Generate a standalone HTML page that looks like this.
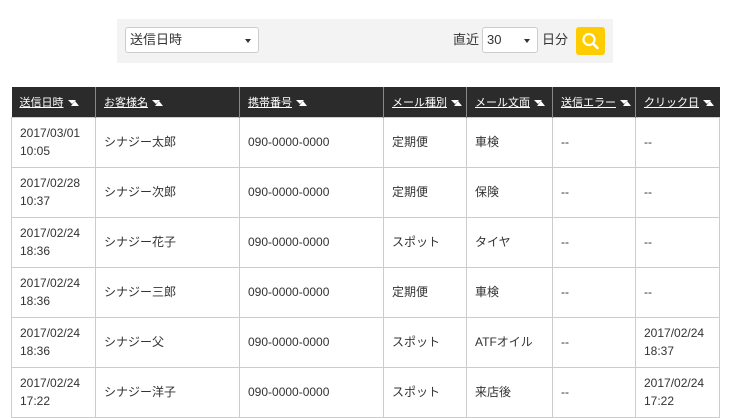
<!DOCTYPE html>
<html><head><meta charset="utf-8"><style>
body{margin:0;width:730px;height:410px;overflow:hidden;background:#fff;font-family:"Liberation Sans","Noto Sans CJK JP",sans-serif;color:#333;}
.bar{position:absolute;left:117px;top:19px;width:496px;height:44px;background:#f3f3f3;}
.sel{position:absolute;top:8px;height:26px;background:#fff;border:1px solid #ccc;border-radius:3px;box-sizing:border-box;font-size:13px;line-height:24px;padding-left:4px;}
.sel:after{content:"";position:absolute;right:7px;top:11px;border:3.5px solid transparent;border-top:4px solid #333;}
.lab{position:absolute;top:8px;line-height:26px;font-size:13px;}
.btn{position:absolute;left:459px;top:8px;width:29px;height:28px;background:#ffcc00;border-radius:3px;}
table{position:absolute;left:11px;top:87px;border-collapse:collapse;font-size:12px;}
th{background:#2b2b2b;color:#fff;height:30px;padding:0 0 0 8px;text-align:left;font-weight:normal;font-size:11px;border-left:1px solid #888;box-sizing:border-box;}
th u{text-decoration:underline;}
th i{display:inline-block;width:10px;height:6px;margin-left:4px;position:relative;}
th i:before{content:"";position:absolute;left:0;top:0;border-left:4px solid transparent;border-right:4px solid transparent;border-top:4px solid #fff;}
th i:after{content:"";position:absolute;left:3px;top:1px;border-left:4px solid transparent;border-right:4px solid transparent;border-bottom:5px solid #fff;}
td{border:1px solid #ccc;height:50px;padding:0 0 0 8px;box-sizing:border-box;line-height:18px;vertical-align:middle;}
</style></head><body>
<div class="bar">
<div class="sel" style="left:8px;width:134px;">送信日時</div>
<div class="lab" style="left:336px;">直近</div>
<div class="sel" style="left:365px;width:56px;">30</div>
<div class="lab" style="left:425px;">日分</div>
<div class="btn"><svg width="29" height="28" viewBox="0 0 29 28"><circle cx="13" cy="12.5" r="5.5" fill="none" stroke="#fff" stroke-width="2.2"/><line x1="17" y1="16.5" x2="21.5" y2="21" stroke="#fff" stroke-width="2.6" stroke-linecap="round"/></svg></div>
</div>
<table>
<tr><th style="width:84px;border-left:none"><u>送信日時</u><i></i></th><th style="width:144px"><u>お客様名</u><i></i></th><th style="width:144px"><u>携帯番号</u><i></i></th><th style="width:83px"><u>メール種別</u><i></i></th><th style="width:86px"><u>メール文面</u><i></i></th><th style="width:83px"><u>送信エラー</u><i></i></th><th style="width:84px"><u>クリック日</u><i></i></th></tr>
<tr><td>2017/03/01<br>10:05</td><td>シナジー太郎</td><td>090-0000-0000</td><td>定期便</td><td>車検</td><td>--</td><td>--</td></tr>
<tr><td>2017/02/28<br>10:37</td><td>シナジー次郎</td><td>090-0000-0000</td><td>定期便</td><td>保険</td><td>--</td><td>--</td></tr>
<tr><td>2017/02/24<br>18:36</td><td>シナジー花子</td><td>090-0000-0000</td><td>スポット</td><td>タイヤ</td><td>--</td><td>--</td></tr>
<tr><td>2017/02/24<br>18:36</td><td>シナジー三郎</td><td>090-0000-0000</td><td>定期便</td><td>車検</td><td>--</td><td>--</td></tr>
<tr><td>2017/02/24<br>18:36</td><td>シナジー父</td><td>090-0000-0000</td><td>スポット</td><td>ATFオイル</td><td>--</td><td>2017/02/24<br>18:37</td></tr>
<tr><td>2017/02/24<br>17:22</td><td>シナジー洋子</td><td>090-0000-0000</td><td>スポット</td><td>来店後</td><td>--</td><td>2017/02/24<br>17:22</td></tr>
</table>
</body></html>
